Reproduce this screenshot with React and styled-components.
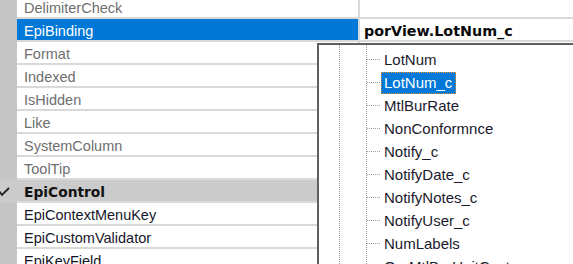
import styled, { createGlobalStyle } from "styled-components";

const GlobalStyle = createGlobalStyle`
  html, body {
    margin: 0;
    padding: 0;
    background: #ffffff;
    overflow: hidden;
  }
`;

const Stage = styled.div`
  position: relative;
  width: 573px;
  height: 264px;
  overflow: hidden;
  background: #ffffff;
  font-family: "Liberation Sans", Arial, sans-serif;
`;

const Grid = styled.div`
  display: flex;
  flex-direction: column;
  margin-top: -4px;
`;

const Row = styled.div`
  display: grid;
  grid-template-columns: 17px 341px 2px 1fr;
  height: 23px;
`;

const Gutter = styled.div`
  background: ${(p) => (p.$category ? "#cbcbcb" : "#c6c6c6")};
  display: flex;
  align-items: center;
  padding-bottom: 1px;
`;

const toneColor = {
  muted: "#6f6f6f",
  normal: "#16162a",
};

const NameCell = styled.div`
  height: 21px;
  line-height: 25px;
  padding-left: 7px;
  border-bottom: 2px solid #d9d9d9;
  background: ${(p) => (p.$selected ? "#0078d7" : p.$category ? "#cbcbcb" : "#ffffff")};
  color: ${(p) => (p.$selected ? "#ffffff" : p.$category ? "#111111" : toneColor[p.$tone])};
  font-family: ${(p) => (p.$category ? '"DejaVu Sans", sans-serif' : '"Liberation Sans", Arial, sans-serif')};
  font-weight: ${(p) => (p.$category ? 700 : 400)};
  font-size: ${(p) => (p.$category ? "13.8px" : "14.5px")};
  white-space: nowrap;
  overflow: hidden;
`;

const Divider = styled.div`
  background: #d9d9d9;
`;

const ValueCell = styled.div`
  height: 21px;
  line-height: 24px;
  padding-left: 4px;
  border-bottom: 2px solid #d9d9d9;
  background: ${(p) => (p.$category ? "#cbcbcb" : "#ffffff")};
  font-family: "DejaVu Sans", sans-serif;
  font-weight: 700;
  font-size: 14.3px;
  color: #0a0a0a;
  white-space: nowrap;
  overflow: hidden;
`;

const Tick = styled.svg`
  width: 10px;
  height: 12px;
`;

const Popup = styled.div`
  position: absolute;
  left: 317px;
  top: 43px;
  right: 0;
  bottom: 0;
  background: #ffffff;
  border-left: 2px solid #5f5f5f;
  border-top: 2px solid #5f5f5f;
`;

const TreeList = styled.div`
  height: 100%;
  padding-top: 3px;
  box-sizing: border-box;
  background-image:
    repeating-linear-gradient(to bottom, #9c9c9c 0 1px, transparent 1px 2px),
    repeating-linear-gradient(to bottom, #9c9c9c 0 1px, transparent 1px 2px);
  background-size: 1px 100%, 1px 100%;
  background-position: 20px 0, 47px 0;
  background-repeat: no-repeat;
`;

const TreeItem = styled.div`
  display: flex;
  align-items: center;
  height: 23px;
  padding-left: 48px;
`;

const Connector = styled.span`
  width: 13px;
  height: 1px;
  background: repeating-linear-gradient(to right, #9c9c9c 0 1px, transparent 1px 2px);
`;

const TreeLabel = styled.span`
  margin-left: 1px;
  padding: 0 4px 0 3px;
  height: 22px;
  line-height: 22px;
  font-size: 15px;
  white-space: nowrap;
  color: ${(p) => (p.$selected ? "#ffffff" : "#1a1a2c")};
  background: ${(p) => (p.$selected ? "#0078d7" : "transparent")};
  outline: ${(p) => (p.$selected ? "1px dotted #d9943c" : "none")};
  outline-offset: -1px;
`;

const rows = [
  { name: "DelimiterCheck", tone: "muted" },
  { name: "EpiBinding", selected: true, value: "porView.LotNum_c" },
  { name: "Format", tone: "muted" },
  { name: "Indexed", tone: "muted" },
  { name: "IsHidden", tone: "muted" },
  { name: "Like", tone: "muted" },
  { name: "SystemColumn", tone: "muted" },
  { name: "ToolTip", tone: "muted" },
  { name: "EpiControl", category: true },
  { name: "EpiContextMenuKey", tone: "normal" },
  { name: "EpiCustomValidator", tone: "normal" },
  { name: "EpiKeyField", tone: "normal" },
];

const fields = [
  "LotNum",
  "LotNum_c",
  "MtlBurRate",
  "NonConformnce",
  "Notify_c",
  "NotifyDate_c",
  "NotifyNotes_c",
  "NotifyUser_c",
  "NumLabels",
  "OurMtlBurUnitCost",
];

export default function App() {
  return (
    <>
      <GlobalStyle />
      <Stage>
        <Grid>
          {rows.map((r) => (
            <Row key={r.name}>
              <Gutter $category={r.category}>
                {r.category && (
                  <Tick viewBox="0 0 10 12">
                    <polyline points="-1,6 2,10 9,3" fill="none" stroke="#222" strokeWidth="1.8" />
                  </Tick>
                )}
              </Gutter>
              <NameCell $selected={r.selected} $category={r.category} $tone={r.tone}>
                {r.name}
              </NameCell>
              <Divider />
              <ValueCell $category={r.category}>{r.value}</ValueCell>
            </Row>
          ))}
        </Grid>
        <Popup>
          <TreeList>
            {fields.map((f) => (
              <TreeItem key={f}>
                <Connector />
                <TreeLabel $selected={f === "LotNum_c"}>{f}</TreeLabel>
              </TreeItem>
            ))}
          </TreeList>
        </Popup>
      </Stage>
    </>
  );
}
